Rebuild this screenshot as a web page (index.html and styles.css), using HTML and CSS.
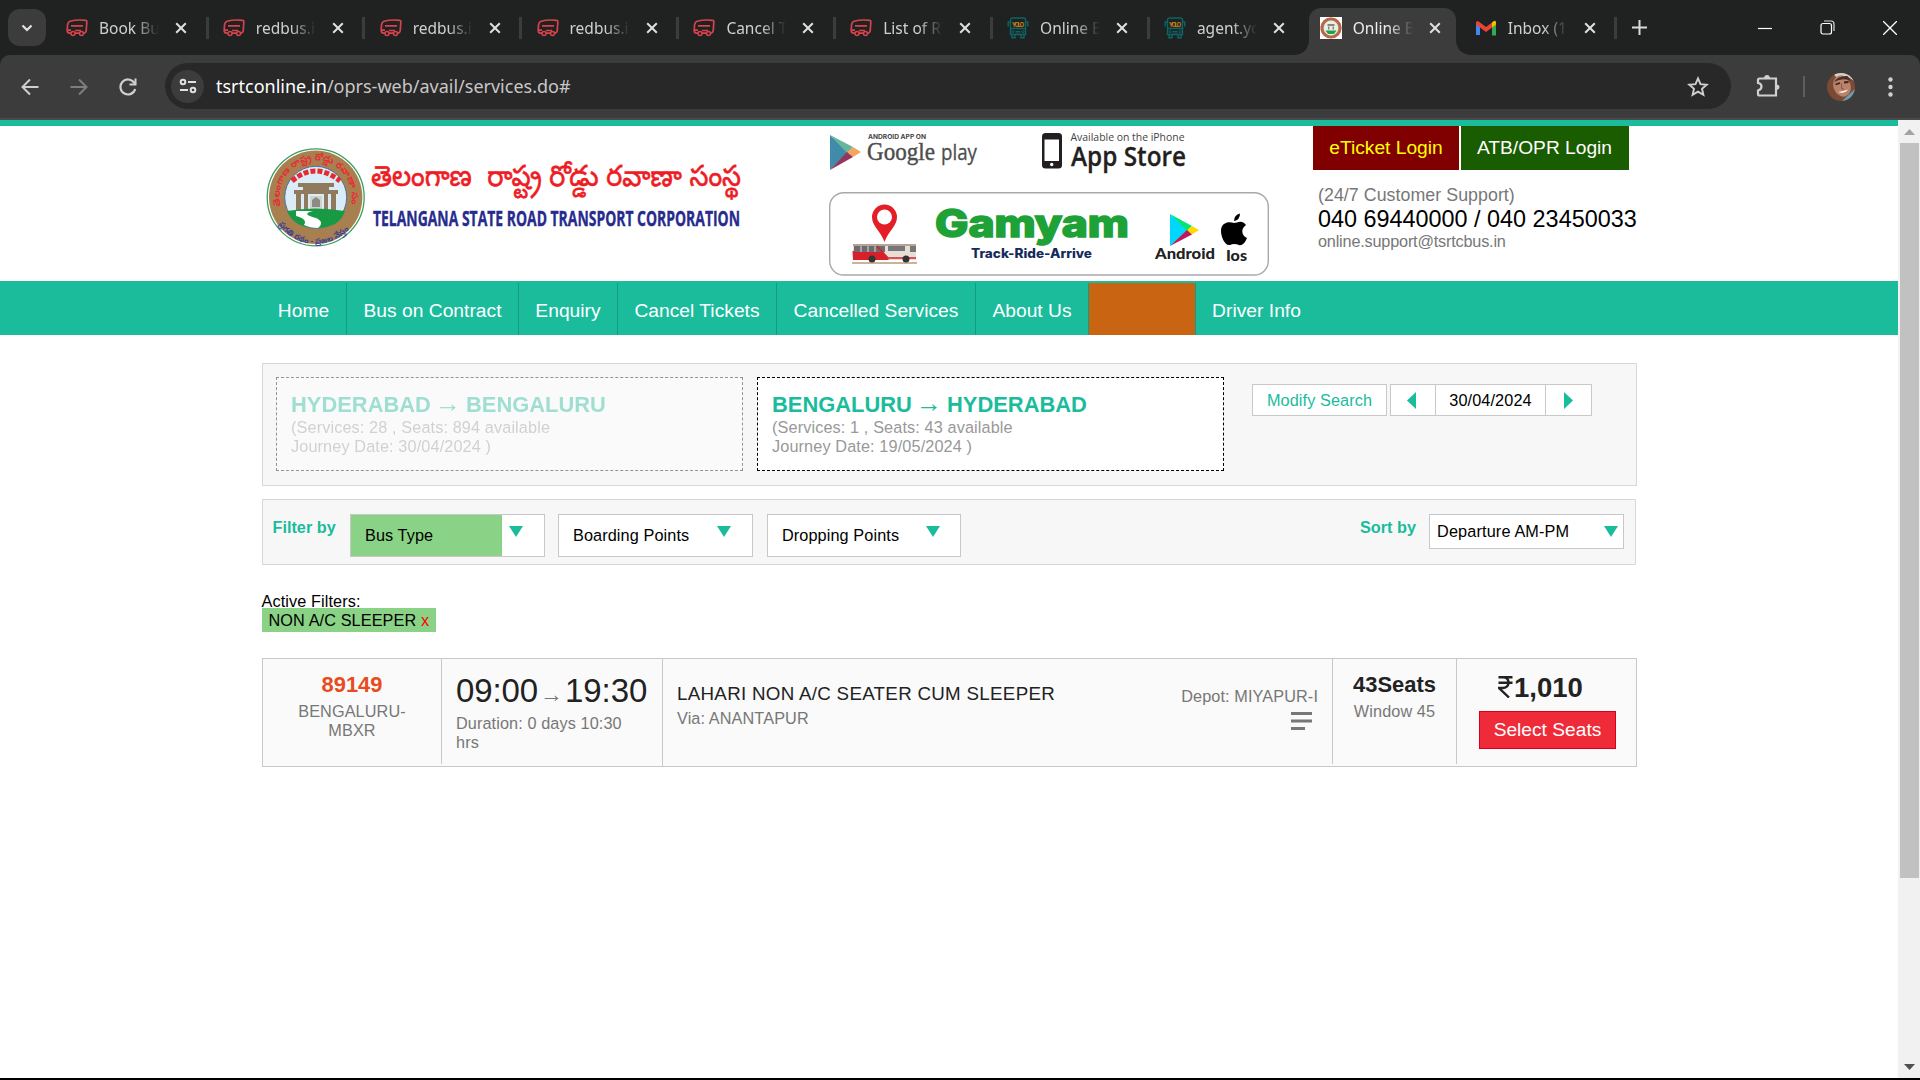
FILE: index.html
```html
<!DOCTYPE html>
<html lang="en">
<head>
<meta charset="utf-8">
<title>Online Bus Booking</title>
<link rel="stylesheet" href="styles.css">
</head>
<body>
<svg class="defs" width="0" height="0">
  <defs>
    <symbol id="redbus" viewBox="0 0 22 18">
      <path d="M4 2.2 Q11 .4 19.5 1.3 Q21 1.5 20.8 3 L20.3 11 Q20 14 18 14.2 L3.5 14.2 Q1.2 14 1.2 11.5 L1.5 6 Q2 3 4 2.2Z M5 6.800h12 M1.3 11.2H5M9 11.5h6" fill="none" stroke="#d7434d" stroke-width="1.7"/>
      <circle cx="7" cy="14.6" r="2" fill="#202221" stroke="#d7434d" stroke-width="1.5"/>
      <circle cx="15.5" cy="14.6" r="2" fill="#202221" stroke="#d7434d" stroke-width="1.5"/>
    </symbol>
    <symbol id="yolo" viewBox="0 0 22 22">
      <path d="M3.5 3Q3.5 1 6 1H16Q18.500 1 18.500 3V17.500H3.500ZM3.500 5H1.200V9.500M18.500 5H20.800V9.500M3.500 11.500H18.500M5 18V20.800H8V18M14 18V20.800H17V18M8.500 14.800H13.500M8 17.300H14" fill="none" stroke="#0d6467" stroke-width="1.400"/>
      <circle cx="6" cy="14.700" r="1.100" fill="none" stroke="#0d6467"/><circle cx="16" cy="14.700" r="1.100" fill="none" stroke="#0d6467"/>
      <text x="11" y="9.500" font-size="5.600" font-weight="bold" text-anchor="middle" fill="#c98a1c" font-family="Inter" textLength="12">YOLO</text>
    </symbol>
    <symbol id="x" viewBox="0 0 12 12"><path d="M1.200 1.200L10.800 10.800M10.800 1.200L1.200 10.800" stroke="currentColor" stroke-width="2" fill="none"/></symbol>
    <symbol id="down" viewBox="0 0 14 11"><path d="M0 0H14L7 11Z" fill="#1abc9c"/></symbol>
  </defs>
</svg>

<div class="chrome">
<div class="tabstrip">
  <button class="tab-search"><svg width="12" height="8" viewBox="0 0 12 8"><path d="M1.500 1.500L6 6L10.500 1.500" fill="none" stroke="#e3e3e3" stroke-width="2.200"/></svg></button>
  <div class="tab"><svg class="fav"><use href="#redbus"/></svg><span class="name">Book Bu</span><svg class="close"><use href="#x"/></svg></div>
  <div class="tab"><svg class="fav"><use href="#redbus"/></svg><span class="name">redbus.in</span><svg class="close"><use href="#x"/></svg></div>
  <div class="tab"><svg class="fav"><use href="#redbus"/></svg><span class="name">redbus.in</span><svg class="close"><use href="#x"/></svg></div>
  <div class="tab"><svg class="fav"><use href="#redbus"/></svg><span class="name">redbus.in</span><svg class="close"><use href="#x"/></svg></div>
  <div class="tab"><svg class="fav"><use href="#redbus"/></svg><span class="name">Cancel T</span><svg class="close"><use href="#x"/></svg></div>
  <div class="tab"><svg class="fav"><use href="#redbus"/></svg><span class="name">List of RT</span><svg class="close"><use href="#x"/></svg></div>
  <div class="tab"><svg class="fav tall"><use href="#yolo"/></svg><span class="name">Online B</span><svg class="close"><use href="#x"/></svg></div>
  <div class="tab last"><svg class="fav tall"><use href="#yolo"/></svg><span class="name">agent.yo</span><svg class="close"><use href="#x"/></svg></div>
  <div class="tab active">
    <svg class="fav tall" viewBox="0 0 22 22"><path fill="#fff" d="M0 0h22v22H0z"/><circle cx="11" cy="11" r="9" fill="#e8efe6" stroke="#a9764e" stroke-width="3.200"/><circle cx="11" cy="11" r="9.400" fill="none" stroke="#d95043" stroke-width="1.600" stroke-dasharray="2 1.300"/><path d="M7.500 7h7v2h-7zM8 9.500h1.500v3H8zM12.500 9.500H14v3h-1.500z" fill="#8d8577"/><path d="M5.500 13.500h11L14 17H8z" fill="#1ea24c"/></svg>
    <span class="name">Online B</span><svg class="close"><use href="#x"/></svg></div>
  <div class="tab inbox">
    <svg class="fav" viewBox="0 0 22 18"><path d="M1 3v13h4V7z" fill="#4285f4"/><path d="M17 7v9.500h4V3z" fill="#34a853"/><path d="M17 3.500V8.500L21 5.500V3Q20 .5 17 3.500z" fill="#fbbc04"/><path d="M1 3.500V5.500L11 13L17 8.500V3.500L11 8L5 3.500Q2 .5 1 3.500z" fill="#ea4335"/></svg>
    <span class="name">Inbox (1</span><svg class="close"><use href="#x"/></svg></div>
  <svg class="plus" width="15" height="15" viewBox="0 0 15 15"><path d="M7.500 0V15M0 7.500H15" stroke="#dadada" stroke-width="2"/></svg>
  <div class="win">
    <svg width="14" height="14" viewBox="0 0 14 14"><path d="M0 7.500H14" stroke="#fff" stroke-width="1.200"/></svg>
    <svg width="15" height="15" viewBox="0 0 15 15"><rect x="1" y="3.500" width="10.500" height="10.500" rx="2" fill="none" stroke="#fff" stroke-width="1.200"/><path d="M4 1H11Q14 1 14 4V11" fill="none" stroke="#ddd" stroke-width="1.200"/></svg>
    <svg width="14" height="14" viewBox="0 0 14 14"><path d="M0 0L14 14M14 0L0 14" stroke="#fff" stroke-width="1.300"/></svg>
  </div>
</div>

<div class="toolbar">
  <svg class="back" width="18" height="18" viewBox="0 0 18 18"><path d="M17.500 9H2M9 1.500L1.500 9L9 16.500" fill="none" stroke="#cfcfcf" stroke-width="2"/></svg>
  <svg class="fwd" width="18" height="18" viewBox="0 0 18 18"><path d="M.5 9H16M9 1.500L16.500 9L9 16.500" fill="none" stroke="#7e7e7e" stroke-width="2"/></svg>
  <svg class="reload" width="18" height="18" viewBox="0 0 18 18"><path d="M16.200 11A7.500 7.500 0 1 1 15 4.500L16.500 6" fill="none" stroke="#cfcfcf" stroke-width="2.200"/><path d="M17.500 .5V7.500H10.500V5.500H15.500V.5Z" fill="#cfcfcf"/></svg>
  <div class="omnibox">
    <span class="chip"><svg width="18" height="16" viewBox="0 0 18 16"><g fill="none" stroke="#e0e0e0" stroke-width="2"><circle cx="4" cy="4" r="2.300"/><path d="M9 4H17M1 12H9"/><circle cx="14" cy="12" r="2.300"/></g></svg></span>
    <span class="url"><b>tsrtconline.in</b>/oprs-web/avail/services.do#</span>
    <svg class="star" width="22" height="21" viewBox="0 0 22 21"><path d="M11 2.400L13.500 8.100L19.700 8.700L15 12.800L16.400 18.900L11 15.700L5.600 18.900L7 12.800L2.300 8.700L8.500 8.100Z" fill="none" stroke="#d0d0d0" stroke-width="1.900"/></svg>
  </div>
  <svg class="puzzle" width="24" height="24" viewBox="0 0 24 24"><path d="M3.500 4.500H20V21.500H3.500Q2 21.500 2 20V16.500Q5.500 15.500 5.500 12.500T2 9V6Q2 4.500 3.500 4.500Z" fill="none" stroke="#d0d0d0" stroke-width="2.200"/><path d="M8 4.500Q8 1 11 1T14 4.500M20 10.500Q23.500 10.500 23.500 13T20 16" fill="#d0d0d0"/></svg>
  <span class="bar"></span>
  <svg class="avatar" width="28" height="28" viewBox="0 0 28 28"><clipPath id="av"><circle cx="14" cy="14" r="14"/></clipPath><g clip-path="url(#av)"><path fill="#7b4a35" d="M0 0h28v28H0z"/><path fill="#d8cfc8" d="M6 0H24L27 8L20 3L9 4Z"/><path fill="#6f9db0" d="M15 28L28 16V28Z"/><ellipse cx="15" cy="13" rx="8.500" ry="11" fill="#b9836b" transform="rotate(-20 15 13)"/><path d="M7 9Q10 3 20 3L24 8Q16 4 7 9Z" fill="#4a2f28"/><path d="M8.500 11.500l4.500-1.500M17 9.500l4.500-.5" stroke="#3a241f" stroke-width="1.800"/><path d="M14.500 10.500v5l2.500.5" stroke="#8a5645" fill="none"/><path d="M11 19Q17 21.500 21 16.500Q17 18 11 19Z" fill="#fff"/></g></svg>
  <svg class="dots" width="5" height="20" viewBox="0 0 5 20"><g fill="#d0d0d0"><circle cx="2.500" cy="2.500" r="2.200"/><circle cx="2.500" cy="10" r="2.200"/><circle cx="2.500" cy="17.500" r="2.200"/></g></svg>
</div>
</div>

<div class="viewport">
<div class="page">
  <header class="head">
    <svg class="logo" width="500" height="120" viewBox="262 137 500 120">
      <defs>
        <path id="ringTop" d="M281 206A36 36 0 1 1 350.400 206"/>
        <path id="ringBottom" d="M275 218A45 45 0 0 0 356.400 218"/>
      </defs>
      <circle cx="315.700" cy="197.300" r="48.500" fill="#fff" stroke="#3b9d5e" stroke-width="1.300"/>
      <circle cx="315.700" cy="197.300" r="46.700" fill="#a8804f"/>
      <circle cx="315.700" cy="197.300" r="31" fill="#d9ecf8" stroke="#4a6fa8" stroke-width="1"/>
      <path d="M292 181Q315 161 340 181" fill="none" stroke="#e62a2e" stroke-width="5" stroke-dasharray="5 2"/>
      <g fill="#8f7a5e"><path d="M298 183H334V187H298ZM294 190H338V194H294ZM296 194H301V211H296ZM304 194H308V211H304ZM324 194H328V211H324ZM331 194H336V211H331ZM303 186H329V190H303Z"/></g>
      <path d="M310 196h12v13h-12z" fill="#cfd3ca"/><path d="M312 200l4-3l4 3v7h-8z" fill="#8b8b85"/>
      <path d="M287 211Q315 206 345 211Q340 228 316 228Q294 228 287 211Z" fill="#189a44"/>
      <path d="M296 211H313Q300 214 316 218Q325 222 318 228Q310 228 304 225Q308 219 296 216Z" fill="#fff"/>
      <text class="te" font-size="9.500" font-weight="bold" fill="#e92c35"><textPath href="#ringTop">తెలంగాణ రాష్ట్ర రోడ్డు రవాణా సంస్థ</textPath></text>
      <text class="te" font-size="8" font-weight="bold" fill="#3a3f9a"><textPath href="#ringBottom" startOffset="7">ప్రగతి రథం - ప్రజల నేస్తం</textPath></text>
      <text class="te" x="371" y="186" font-size="29" fill="#ee1c25" stroke="#ee1c25" stroke-width=".6" textLength="370" lengthAdjust="spacingAndGlyphs" xml:space="preserve">తెలంగాణ  రాష్ట్ర రోడ్డు రవాణా సంస్థ</text>
      <text x="373" y="226" font-family="Open Sans" font-weight="700" font-size="22" fill="#272b8e" stroke="#272b8e" stroke-width=".4" textLength="367" lengthAdjust="spacingAndGlyphs">TELANGANA STATE ROAD TRANSPORT CORPORATION</text>
    </svg>
    <svg class="apps" width="442" height="152" viewBox="829 127 442 152">
      <path d="M830 135V170L848 152Z" fill="#3f8ba9"/><path d="M830 135L853 147L847 153Z" fill="#67b59a"/><path d="M853 147L861 152L853 157L847 152Z" fill="#f3a561"/><path d="M830 170L853 157L847 152Z" fill="#93355c"/>
      <text x="868" y="139" font-family="Inter" font-weight="700" font-size="6.500" fill="#444" textLength="58" lengthAdjust="spacingAndGlyphs">ANDROID APP ON</text>
      <text x="867" y="160" font-family="Liberation Serif" font-size="25" fill="#4d4d4d" stroke="#4d4d4d" stroke-width=".4" textLength="68" lengthAdjust="spacingAndGlyphs">Google</text>
      <text x="941" y="160" font-family="Open Sans" font-size="22" fill="#4d4d4d" stroke="#4d4d4d" stroke-width=".3" textLength="36" lengthAdjust="spacingAndGlyphs">play</text>
      <rect x="1042" y="133" width="20" height="35.500" rx="3.500" fill="#231f20"/><rect x="1044.500" y="139.500" width="14.500" height="21.500" fill="#fff"/><circle cx="1051.700" cy="164.500" r="1.700" fill="#fff"/>
      <text x="1070.500" y="141" font-family="Open Sans" font-size="11.500" fill="#444" textLength="114" lengthAdjust="spacingAndGlyphs">Available on the iPhone</text>
      <text x="1071" y="166" font-family="Open Sans" font-weight="600" font-size="27.500" fill="#231f20" stroke="#231f20" stroke-width=".3" textLength="115" lengthAdjust="spacingAndGlyphs">App Store</text>
      <rect x="829.700" y="192.700" width="438.600" height="82.300" rx="14" fill="#fff" stroke="#a9a9a9" stroke-width="1.400"/>
      <path d="M884.500 242C880 230 872 226 872 217A12.500 12.500 0 0 1 897 217C897 226 889 230 884.500 242Z" fill="#e31e26"/><circle cx="884.500" cy="217" r="7.500" fill="#fff"/>
      <path d="M852 262H917V264H852Z" fill="#c9b49a"/>
      <path d="M853 244H916V260H853Z" fill="#e8ded4"/><path d="M852.500 251H882L889 260H853Z" fill="#d8202a"/><path d="M853 244H916V246H853Z" fill="#b7a496"/><path d="M854 246H885V252H854Z" fill="#6e6a6d"/><path d="M861 246v6M868 246v6M875 246v6" stroke="#ddd"/><path d="M888 246H905V251H888ZM910 246H916V252H910Z" fill="#77767b"/><path d="M877 246L888 258H916" stroke="#d8202a" stroke-width="1.500" fill="none"/>
      <circle cx="872" cy="259" r="3.500" fill="#333"/><circle cx="906" cy="259" r="3.500" fill="#333"/>
      <text x="935" y="236.500" font-family="Inter" font-weight="800" font-size="38" fill="#1ea238" stroke="#1ea238" stroke-width="1.600" textLength="194" lengthAdjust="spacingAndGlyphs">Gamyam</text>
      <text x="971" y="258" font-family="Inter" font-weight="800" font-size="12.500" fill="#152a5c" textLength="121" lengthAdjust="spacingAndGlyphs">Track-Ride-Arrive</text>
      <path d="M1170 214V246L1188 230Z" fill="#00d7fe"/><path d="M1170 214L1192 226L1187 231Z" fill="#00e676"/><path d="M1192 226L1199 230L1192 234.500L1187 230Z" fill="#ffd900"/><path d="M1170 246L1192 234.500L1187 230Z" fill="#c2185b"/>
      <text x="1155" y="259" font-family="Lato" font-weight="900" font-size="15.500" fill="#222" textLength="60" lengthAdjust="spacingAndGlyphs">Android</text>
      <path d="M1234 223C1237 223 1242 219 1246 225C1240 229 1242 236 1247 238C1245 243 1242 246 1239 245Q1234 243 1230 245C1225 246 1221 237 1221 231C1221 223 1228 221 1234 223ZM1234 221Q1234 215 1240 213.500Q1240 220 1234 221Z" fill="#000"/>
      <text x="1226" y="260.500" font-family="Lato" font-weight="900" font-size="15" fill="#222" textLength="21" lengthAdjust="spacingAndGlyphs">Ios</text>
    </svg>
    <div class="support">
      <div class="logins"><a class="eticket">eTicket Login</a><a class="atb">ATB/OPR Login</a></div>
      <div class="s1">(24/7 Customer Support)</div>
      <div class="s2">040 69440000 / 040 23450033</div>
      <div class="s3">online.support@tsrtcbus.in</div>
    </div>
  </header>

  <nav class="nav">
    <a class="n1">Home</a><a class="n2">Bus on Contract</a><a class="n3">Enquiry</a><a class="n4">Cancel Tickets</a><a class="n5">Cancelled Services</a><a class="n6">About Us</a><a class="n7"></a><a class="n8">Driver Info</a>
  </nav>

  <main class="main">
    <section class="routes">
      <div class="route off"><h2>HYDERABAD <i>→</i> BENGALURU</h2><p>(Services: 28 , Seats: 894 available<br>Journey Date: 30/04/2024 )</p></div>
      <div class="route"><h2>BENGALURU <i>→</i> HYDERABAD</h2><p>(Services: 1 , Seats: 43 available<br>Journey Date: 19/05/2024 )</p></div>
      <div class="modify">Modify Search</div>
      <div class="dates"><span class="prev"><svg width="9" height="17" viewBox="0 0 9 17"><path d="M9 0V17L0 8.500Z" fill="#1abc9c"/></svg></span><span class="day">30/04/2024</span><span><svg width="9" height="17" viewBox="0 0 9 17"><path d="M0 0V17L9 8.500Z" fill="#1abc9c"/></svg></span></div>
    </section>

    <section class="filters">
      <b class="by">Filter by</b>
      <div class="drop on"><span>Bus Type</span><svg><use href="#down"/></svg></div>
      <div class="drop"><span>Boarding Points</span><svg><use href="#down"/></svg></div>
      <div class="drop third"><span>Dropping Points</span><svg><use href="#down"/></svg></div>
      <b class="sort">Sort by</b>
      <div class="select"><span>Departure AM-PM</span><svg><use href="#down"/></svg></div>
    </section>

    <div class="active-label">Active Filters:</div>
    <div class="tag">NON A/C SLEEPER <em>x</em></div>

    <article class="service">
      <div class="c1"><b>89149</b><p>BENGALURU-<br>MBXR</p></div>
      <div class="c2"><div class="time">09:00<i>→</i>19:30</div><p>Duration: 0 days 10:30<br>hrs</p></div>
      <div class="c3"><div><div class="bus">LAHARI NON A/C SEATER CUM SLEEPER</div><p>Via: ANANTAPUR</p></div>
        <div class="depot"><p>Depot: MIYAPUR-I</p><svg width="21" height="18" viewBox="0 0 21 18"><path d="M0 1.500H21M0 9H21M0 16.500H14" stroke="#777" stroke-width="3"/></svg></div></div>
      <div class="c4"><b>43Seats</b><p>Window 45</p></div>
      <div class="c5"><div class="price"><svg width="15" height="22" viewBox="0 0 15 22"><path d="M.5 1.300H14.500M.5 6.800H14.500M.5 1.300H5Q10.500 1.500 10.500 6.500T5 12H1L11 21.500" fill="none" stroke="#222" stroke-width="2.400"/></svg><span>1,010</span></div><a class="pick">Select Seats</a></div>
    </article>
  </main>
</div>
<div class="scroll"><svg width="11" height="6" viewBox="0 0 11 6"><path d="M0 6L5.500 0L11 6Z" fill="#a3a3a3"/></svg><span class="thumb"></span><svg class="dn" width="11" height="6" viewBox="0 0 11 6"><path d="M0 0L5.500 6L11 0Z" fill="#505050"/></svg></div>
</div>
</body>
</html>
```
FILE: styles.css
```css
*{box-sizing:border-box}
body{margin:0;width:1920px;height:1080px;overflow:hidden;background:#000;font-family:"Liberation Sans",Arial,sans-serif;font-size:16.25px;line-height:19px;letter-spacing:.1px;color:#000;display:flex;flex-direction:column}
p,h2{margin:0}
i,em{font-style:normal}
svg{display:block;flex:none}
.defs{position:absolute}

.chrome{background:#202221;flex:none;letter-spacing:0}
.tabstrip{height:55px;display:flex;align-items:center;padding-left:8px;font-family:"Noto Sans",sans-serif;font-size:15.5px;color:#d0d0d0}
.tab-search{width:38px;height:37px;margin:0 9px 0 0;padding:0;border:0;border-radius:12px;background:#3c3c3c;display:flex;align-items:center;justify-content:center}
.tab{width:153.5px;height:22px;display:flex;align-items:center;padding-left:11px;flex:none;border-right:3px solid #3b3c3c;margin-right:3.35px}
.fav{width:22px;height:18px}
.fav.tall{height:22px}
.name{width:60px;margin:0 16px 0 11px;white-space:nowrap;overflow:hidden;line-height:24px;-webkit-mask-image:linear-gradient(90deg,#000 58%,transparent);mask-image:linear-gradient(90deg,#000 58%,transparent)}
.close{width:12px;height:12px;color:#e0e0e0}
.tab.last{border-color:transparent}
.tab.active{position:relative;width:147px;height:47px;align-self:flex-end;background:#3c3c3c;border:0;border-radius:12px 12px 0 0;margin:0 0 0 -1px;color:#ededed}
.tab.active::before,.tab.active::after{content:"";position:absolute;bottom:0;width:14px;height:14px}
.tab.active::before{left:-14px;background:radial-gradient(circle at 0 0,transparent 13.500px,#3c3c3c 14px)}
.tab.active::after{right:-14px;background:radial-gradient(circle at 100% 0,transparent 13.500px,#3c3c3c 14px)}
.tab.active .fav,.tab.active .name,.tab.active .close{margin-bottom:8px}
.tab.inbox{width:151px;padding-left:9px;margin:0 0 0 10px}
.plus{margin-left:15px}
.win{margin-left:auto;display:flex;align-items:center;gap:48px;padding-right:23px}

.toolbar{height:65px;background:linear-gradient(#3c3c3c 63px,#4a4a4a 63px);border-radius:10px 10px 0 0;display:flex;align-items:flex-start}
.toolbar>svg{margin-top:23px}
.toolbar .back{margin-left:21px}
.fwd{margin-left:31px}
.reload{margin-left:31px}
.omnibox{margin:8px 0 0 28px;width:1566px;height:46px;border-radius:23px;background:#282828;display:flex;align-items:center;padding-left:6px}
.chip{width:33px;height:33px;border-radius:50%;background:#3c3c3c;display:flex;align-items:center;justify-content:center}
.url{margin-left:12px;font:18px/24px "Noto Sans",sans-serif;color:#c7c7c7;width:1471px}
.url b{font-weight:400;color:#fff}
.toolbar .puzzle{margin:19px 0 0 25px}
.bar{width:2px;height:21px;background:#5e5e5e;margin:21px 0 0 23px}
.toolbar .avatar{margin:18px 0 0 22px}
.toolbar .dots{margin:22px 0 0 33px}

.viewport{display:flex;height:958px;flex:none}
.page{width:1898px;background:#fff;border-top:6px solid #1abc9c}
.head{height:155px;display:flex;padding-left:262px;letter-spacing:0}
.logo{margin-top:11px}
.apps{margin:1px 0 0 67px}
.te{font-family:"Noto Sans Telugu","Noto Sans",sans-serif}
.support{margin-left:42px;color:#777}
.logins{display:flex;gap:2px;height:44px;font-size:19.2px;line-height:43px;text-align:center;white-space:nowrap}
.eticket{width:146px;background:#800000;color:#ff0}
.atb{width:168px;background:#1a5c00;color:#fff;padding-right:1px}
.s1{margin:15px 0 0 5px;font-size:17.8px;line-height:20px;letter-spacing:.05px}
.s2{margin-left:5px;font-size:23.4px;line-height:28px;color:#000;white-space:nowrap}
.s3{margin-left:5px;font-size:16.25px;line-height:17px;letter-spacing:-.19px}

.nav{height:54px;background:#1abc9c;padding:2px 0 0 262px;display:flex;color:#fff;font-size:19.2px;text-align:center;letter-spacing:.03px}
.nav a{height:52px;border-right:1px solid #159a80;white-space:nowrap;line-height:56px}
.n1{width:85px;padding-right:1px}.n2{width:172px}.n3{width:99px}.n4{width:159px}.n5{width:199px}.n6{width:113px}
.n7{width:107px;background:#c86412}
.nav .n8{width:121px;border:0}

.main{margin-left:262px;width:1375px}
.routes{margin-top:28px;width:1375px;height:123px;border:1px solid #d8d8d8;background:#f7f7f7;display:flex;padding:13px 0 0 13px}
.route{width:467px;height:94px;border:1px dashed #000;background:#fff;padding:14px 0 0 14px;margin-right:14px;color:#999}
.off{opacity:.4}
.route h2{height:25px;font-size:21.9px;line-height:25px;letter-spacing:0;color:#1abc9c}
.route i{display:inline-block;width:23px;line-height:20px;font-size:26px;text-indent:-2px;font-family:"Liberation Serif","DejaVu Sans",serif;font-weight:400}
.route p{margin-top:1px;line-height:19px;letter-spacing:.12px}
.modify,.dates{height:32px;margin-top:7px;border:1px solid #c8c8c8;background:#fff;line-height:31px;text-align:center}
.modify{margin-left:14px;width:135px;color:#1abc9c}
.dates{margin-left:3px;width:202px;display:flex}
.dates span{width:45px;display:flex;align-items:center;justify-content:center}
.dates .prev{width:44px;padding-right:3px}
.dates .day{width:113px;border:solid #c8c8c8;border-width:0 1px}

.filters{margin-top:13px;width:1374px;height:66px;border:1px solid #d8d8d8;background:#f7f7f7;display:flex;padding:14px 0 0 10px}
.by,.sort{color:#1abc9c;line-height:27px;letter-spacing:0}
.by{width:77px;text-indent:-.5px}
.drop{width:195px;height:43px;border:1px solid #c8c8c8;background:#fff;display:flex;margin-right:13px}
.drop.third{margin-left:1px;width:194px}
.drop span{width:151px;padding-left:14px;line-height:41px}
.drop.on span{background:#8ad285}
.drop svg,.select svg{width:14px;height:11px;margin:11px 0 0 7px}
.sort{margin-left:auto;margin-right:13px}
.select{width:195px;height:35px;border:1px solid #c8c8c8;background:#fff;display:flex;margin-right:11px;padding-left:7px;line-height:32px}
.select span{width:160px;letter-spacing:.15px}

.active-label{margin-top:26px;height:17px;line-height:21px;text-indent:-.5px}
.tag{width:174px;height:24px;background:#8ad285;padding-left:6.5px;line-height:25px;white-space:nowrap}
.tag em{color:red}

.service{margin-top:26px;height:109px;border:1px solid #c8c8c8;background:#fafafa;display:flex;color:#777}
.service>div{height:105px;border-right:1px solid #c8c8c8;flex:none}
.service b{display:block;font-size:21.9px;line-height:25px;letter-spacing:0;color:#222}
.c1{width:179px;text-align:center;padding-top:13px}
.service .c1 b{color:#e84c1e}
.c1 p,.c4 p{margin-top:5px}
.service .c2{width:221px;height:107px;padding:10px 0 0 14px}
.time{height:42px;font-size:33px;line-height:44px;letter-spacing:-.1px;color:#222;display:flex;white-space:nowrap}
.time i{font:23px/51px "Liberation Serif",serif;color:#777;width:27px;text-align:center;text-indent:-1px}
.c2 p{margin-top:3px}
.c3{width:670px;display:flex;justify-content:space-between;padding:22px 14px 0}
.bus{font-size:18.75px;line-height:25px;letter-spacing:.29px;color:#222}
.c3 p{margin-top:3px}
.c3 .depot p{margin:6px 0 0}
.depot svg{margin:6px 0 0 110px}
.c4{width:124px;text-align:center;padding-top:13px}
.service .c5{border:0;width:179px;letter-spacing:0}
.price{display:flex;margin:17px 0 0 41px;height:22px;font-weight:700;font-size:27.5px;line-height:24px;color:#222}
.price span{margin-left:1px}
.pick{display:block;margin:13px 0 0 22px;width:137px;height:38px;border:1px solid #d9001b;background:#ef2b3a;color:#fff;text-align:center;font-size:19.2px;line-height:35px}

.scroll{width:22px;background:#f1f1f1;display:flex;flex-direction:column;align-items:center;padding-top:9px}
.thumb{width:19px;height:735px;background:#c1c1c1;margin-top:8px}
.scroll .dn{margin-top:auto;margin-bottom:8px}
```
